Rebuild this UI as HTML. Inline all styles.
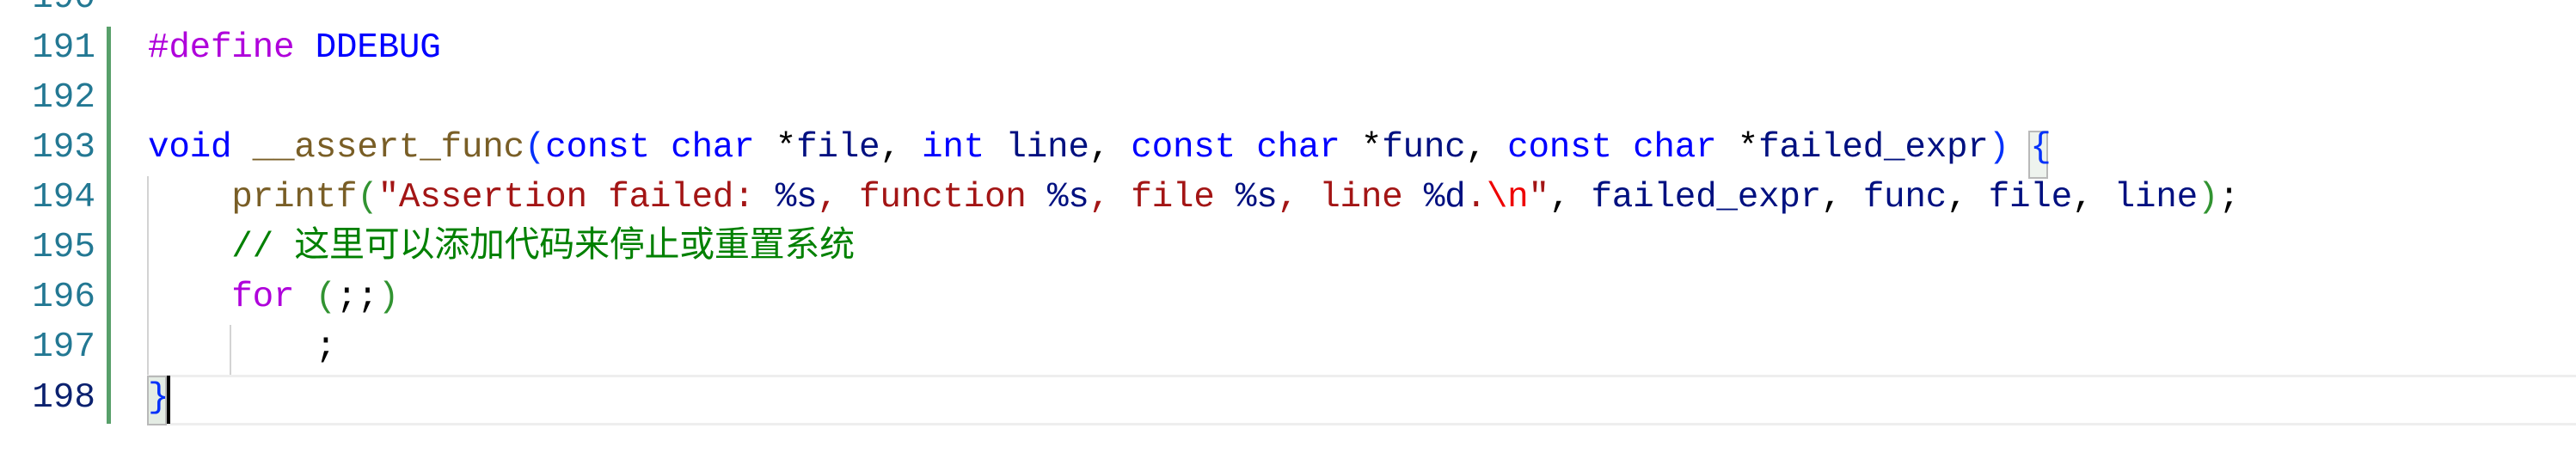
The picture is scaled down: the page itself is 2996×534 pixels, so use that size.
<!DOCTYPE html>
<html><head><meta charset="utf-8"><style>
html,body{margin:0;padding:0;background:#fff;width:2996px;height:534px;overflow:hidden;position:relative}
.ln{position:absolute;left:0;width:111px;text-align:right;font:41px/58.1px "Liberation Mono","Noto Sans CJK SC",monospace;color:#237893}
.c{position:absolute;left:172px;white-space:pre;font:41px/58.1px "Liberation Mono","Noto Sans CJK SC",monospace;color:#000;letter-spacing:-0.28px}
.k{color:#0000ff}.p{color:#af00db}.f{color:#795e26}.s{color:#a31515}.e{color:#ee0000}.v{color:#001080}.g{color:#008000}.b1{color:#0431fa}.b2{color:#319331}
</style></head><body>
<div style="position:absolute;left:124px;top:31px;width:5px;height:462px;background:#58a06a"></div>
<div style="position:absolute;left:171px;top:436px;right:0;height:53px;border-top:3px solid #eeeeee;border-bottom:3px solid #eeeeee"></div>
<div style="position:absolute;left:171px;top:205px;width:2px;height:231px;background:#d3d3d3"></div>
<div style="position:absolute;left:267px;top:378px;width:2px;height:58px;background:#d3d3d3"></div>
<div style="position:absolute;left:171px;top:437px;width:19px;height:54px;background:#e4ece4;border:2px solid #b9b9b9"></div>
<div style="position:absolute;left:2359px;top:152px;width:19px;height:52px;background:#eef3ee;border:2px solid #b9b9b9"></div>
<div style="position:absolute;left:194px;top:437px;width:4px;height:56px;background:#000"></div>

<div class="ln" style="top:-31px">190</div>
<div class="ln" style="top:27px">191</div>
<div class="ln" style="top:85px">192</div>
<div class="ln" style="top:143px">193</div>
<div class="ln" style="top:201px">194</div>
<div class="ln" style="top:259px">195</div>
<div class="ln" style="top:317px">196</div>
<div class="ln" style="top:375px">197</div>
<div class="ln" style="top:434px;color:#0b216f">198</div>

<div class="c" style="top:27px"><span class="p">#define</span> <span class="k">DDEBUG</span></div>
<div class="c" style="top:143px"><span class="k">void</span> <span class="f">__assert_func</span><span class="b1">(</span><span class="k">const</span> <span class="k">char</span> *<span class="v">file</span>, <span class="k">int</span> <span class="v">line</span>, <span class="k">const</span> <span class="k">char</span> *<span class="v">func</span>, <span class="k">const</span> <span class="k">char</span> *<span class="v">failed_expr</span><span class="b1">)</span> <span class="b1">{</span></div>
<div class="c" style="top:201px">    <span class="f">printf</span><span class="b2">(</span><span class="s">"Assertion failed: </span><span class="v">%s</span><span class="s">, function </span><span class="v">%s</span><span class="s">, file </span><span class="v">%s</span><span class="s">, line </span><span class="v">%d</span><span class="s">.</span><span class="e">\n</span><span class="s">"</span>, <span class="v">failed_expr</span>, <span class="v">func</span>, <span class="v">file</span>, <span class="v">line</span><span class="b2">)</span>;</div>
<div class="c g" style="top:259px">    // 这里可以添加代码来停止或重置系统</div>
<div class="c" style="top:317px">    <span class="p">for</span> <span class="b2">(</span>;;<span class="b2">)</span></div>
<div class="c" style="top:375px">        ;</div>
<div class="c" style="top:434px"><span class="b1">}</span></div>
</body></html>
